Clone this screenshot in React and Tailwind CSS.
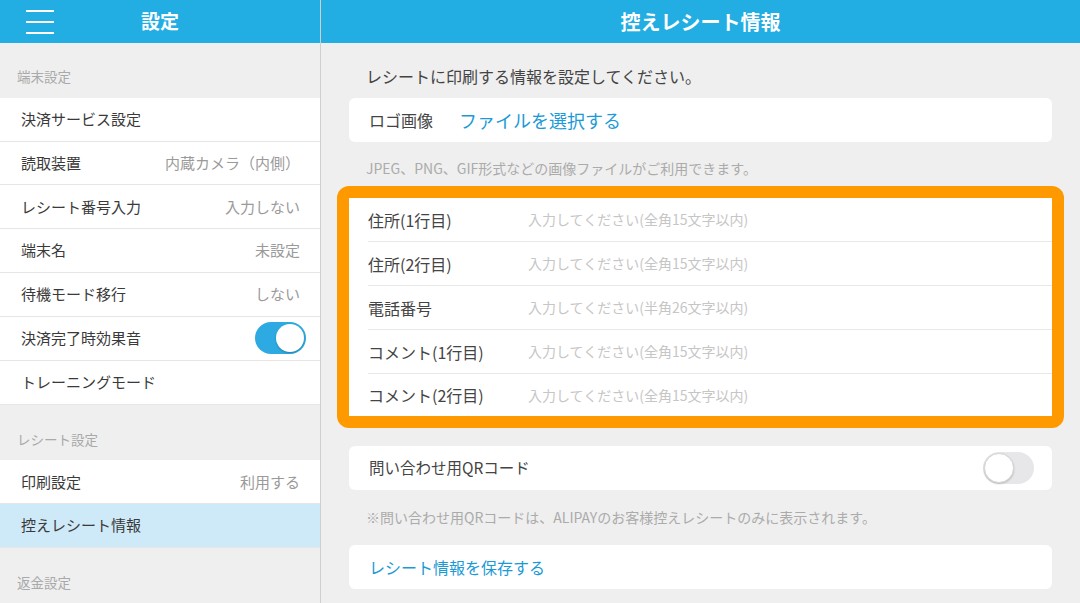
import React from "react";

const font = { fontFamily: '"Noto Sans CJK JP", "Noto Sans", sans-serif' };

function Row({ label, value, children, active }) {
  return (
    <div
      className={`h-[44px] flex items-center justify-between pl-[21px] pr-[20px] border-b border-[#e6e6e6] ${
        active ? "bg-[#cee9f7]" : "bg-white"
      }`}
    >
      <span className="text-[15px] text-[#3a3a3a]">{label}</span>
      {value && <span className="text-[15px] text-[#9a9a9a]">{value}</span>}
      {children}
    </div>
  );
}

function Toggle({ on }) {
  if (on) {
    return (
      <div className="w-[51px] h-[32px] rounded-full bg-[#2eaae2] relative -mr-[6px]">
        <div className="absolute right-[2px] top-[2px] w-[28px] h-[28px] rounded-full bg-white shadow-[0_1px_2px_rgba(0,0,0,0.25)]" />
      </div>
    );
  }
  return (
    <div className="w-[51px] h-[32px] rounded-full bg-[#e7e7ea] relative">
      <div className="absolute left-[1px] top-[1px] w-[30px] h-[30px] rounded-full bg-white border border-[#d6d6d6] shadow-[0_1px_2px_rgba(0,0,0,0.2)]" />
    </div>
  );
}

function SectionHead({ children, tall }) {
  return (
    <div
      className={`${tall ? "h-[56px]" : "h-[55px]"} flex items-end pb-[11px] pl-[17px] text-[13.5px] text-[#a9a9a9]`}
    >
      {children}
    </div>
  );
}

function InputRow({ label, placeholder, last }) {
  return (
    <div className={`${last ? "h-[42px]" : "h-[44px]"} flex items-center ml-[19px]`}>
      <div
        className={`flex items-center h-full w-full ${last ? "" : "border-b border-[#e8e8e8]"}`}
      >
        <span className="w-[160px] text-[16px] text-[#444]">{label}</span>
        <span className="text-[14px] text-[#c6c6c6]">{placeholder}</span>
      </div>
    </div>
  );
}

export default function App() {
  return (
    <div style={font} className="w-[1080px] h-[603px] flex overflow-hidden bg-[#efefef]">
      {/* Left */}
      <div className="w-[321px] shrink-0 border-r border-[#cfcfcf] flex flex-col">
        <div className="h-[43px] bg-[#22ade3] flex items-center relative">
          <div className="absolute left-[26px] top-[10px] flex flex-col gap-[9px]">
            <div className="w-[28px] h-[2px] bg-white" />
            <div className="w-[28px] h-[2px] bg-white" />
            <div className="w-[28px] h-[2px] bg-white" />
          </div>
          <div className="w-full text-center text-white text-[19px] font-bold">設定</div>
        </div>
        <SectionHead>端末設定</SectionHead>
        <Row label="決済サービス設定" />
        <Row label="読取装置" value="内蔵カメラ（内側）" />
        <Row label="レシート番号入力" value="入力しない" />
        <Row label="端末名" value="未設定" />
        <Row label="待機モード移行" value="しない" />
        <Row label="決済完了時効果音">
          <Toggle on />
        </Row>
        <Row label="トレーニングモード" />
        <SectionHead tall>レシート設定</SectionHead>
        <Row label="印刷設定" value="利用する" />
        <Row label="控えレシート情報" active />
        <SectionHead>返金設定</SectionHead>
      </div>

      {/* Right */}
      <div className="flex-1 flex flex-col">
        <div className="h-[43px] bg-[#22ade3] flex items-center justify-center text-white text-[20px] font-bold">
          控えレシート情報
        </div>
        <div className="px-[28px] flex flex-col">
          <div className="h-[55px] flex items-end pb-[10px] pl-[17px] text-[16px] text-[#444]">
            レシートに印刷する情報を設定してください。
          </div>
          <div className="h-[44px] bg-white rounded-[6px] flex items-center pl-[20px]">
            <span className="w-[90px] text-[16px] text-[#444]">ロゴ画像</span>
            <span className="text-[18px] text-[#1b9ad6]">ファイルを選択する</span>
          </div>
          <div className="h-[44px] flex items-center pt-[9px] pl-[17px] text-[14px] text-[#ababab]">
            JPEG、PNG、GIF形式などの画像ファイルがご利用できます。
          </div>
          <div className="-mx-[12px] border-[12px] border-[#ff9900] rounded-[12px] bg-white">
            <div className="bg-white">
              <InputRow label="住所(1行目)" placeholder="入力してください(全角15文字以内)" />
              <InputRow label="住所(2行目)" placeholder="入力してください(全角15文字以内)" />
              <InputRow label="電話番号" placeholder="入力してください(半角26文字以内)" />
              <InputRow label="コメント(1行目)" placeholder="入力してください(全角15文字以内)" />
              <InputRow label="コメント(2行目)" placeholder="入力してください(全角15文字以内)" last />
            </div>
          </div>
          <div className="h-[18px]" />
          <div className="h-[44px] bg-white rounded-[6px] flex items-center justify-between pl-[20px] pr-[18px]">
            <span className="text-[15.5px] text-[#444]">問い合わせ用QRコード</span>
            <Toggle />
          </div>
          <div className="h-[55px] flex items-center pl-[17px] text-[14px] text-[#ababab]">
            ※問い合わせ用QRコードは、ALIPAYのお客様控えレシートのみに表示されます。
          </div>
          <div className="h-[44px] bg-white rounded-[6px] flex items-center pl-[20px] text-[16px] text-[#1b9ad6]">
            レシート情報を保存する
          </div>
        </div>
      </div>
    </div>
  );
}
